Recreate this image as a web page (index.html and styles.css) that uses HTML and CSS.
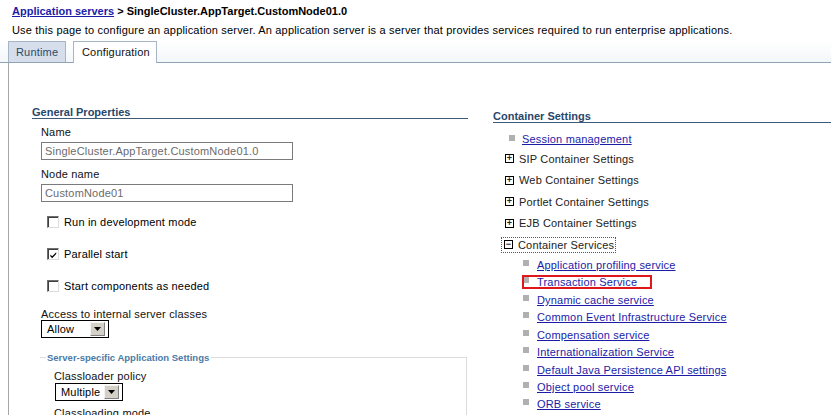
FILE: index.html
```html
<!DOCTYPE html>
<html>
<head>
<meta charset="utf-8">
<link rel="stylesheet" href="styles.css">
</head>
<body>
<div class="crumb"><a href="#">Application servers</a> &gt; SingleCluster.AppTarget.CustomNode01.0</div>
<div class="desc">Use this page to configure an application server. An application server is a server that provides services required to run enterprise applications.</div>
<div class="tabbar">
  <div class="tab tab-off">Runtime</div>
  <div class="tab tab-on">Configuration</div>
</div>
<div class="panel">
  <div class="col-left">
    <div class="heading">General Properties</div>
    <div class="field">
      <div class="label">Name</div>
      <div class="input">SingleCluster.AppTarget.CustomNode01.0</div>
    </div>
    <div class="field">
      <div class="label">Node name</div>
      <div class="input">CustomNode01</div>
    </div>
    <div class="check"><span class="cb"></span>Run in development mode</div>
    <div class="check"><span class="cb"><svg width="10" height="10" viewBox="0 0 10 10"><path d="M1.5 4.5 L3.5 6.5 L8 2 L8 4 L3.5 8.5 L1.5 6.5 Z" fill="#000"/></svg></span>Parallel start</div>
    <div class="check"><span class="cb"></span>Start components as needed</div>
    <div class="field sel-field">
      <div class="label">Access to internal server classes</div>
      <div class="select sel-allow"><span class="sel-text">Allow</span><span class="sel-btn"><svg width="7" height="4" viewBox="0 0 7 4"><path d="M0 0 H7 L3.5 4 Z" fill="#000"/></svg></span></div>
    </div>
    <div class="fieldset">
      <div class="legend">Server-specific Application Settings</div>
      <div class="label">Classloader policy</div>
      <div class="select sel-mult"><span class="sel-text">Multiple</span><span class="sel-btn"><svg width="7" height="4" viewBox="0 0 7 4"><path d="M0 0 H7 L3.5 4 Z" fill="#000"/></svg></span></div>
      <div class="label label-next">Classloading mode</div>
    </div>
  </div>
  <div class="col-right">
    <div class="heading">Container Settings</div>
    <div class="item top-link"><span class="bullet"></span><a href="#">Session management</a></div>
    <div class="item exp"><span class="pm">+</span>SIP Container Settings</div>
    <div class="item exp"><span class="pm">+</span>Web Container Settings</div>
    <div class="item exp"><span class="pm">+</span>Portlet Container Settings</div>
    <div class="item exp"><span class="pm">+</span>EJB Container Settings</div>
    <div class="item exp"><span class="focus"><span class="pm">&minus;</span>Container Services</span></div>
    <ul class="sub">
      <li><span class="bullet"></span><a href="#">Application profiling service</a></li>
      <li class="hl"><span class="bullet"></span><a href="#">Transaction Service</a></li>
      <li><span class="bullet"></span><a href="#">Dynamic cache service</a></li>
      <li><span class="bullet"></span><a href="#">Common Event Infrastructure Service</a></li>
      <li><span class="bullet"></span><a href="#">Compensation service</a></li>
      <li><span class="bullet"></span><a href="#">Internationalization Service</a></li>
      <li><span class="bullet"></span><a href="#">Default Java Persistence API settings</a></li>
      <li><span class="bullet"></span><a href="#">Object pool service</a></li>
      <li><span class="bullet"></span><a href="#">ORB service</a></li>
    </ul>
  </div>
</div>
</body>
</html>
```
FILE: styles.css
```css
html, body {
  margin: 0;
  padding: 0;
  background: #fff;
  overflow: hidden;
}
body {
  font-family: "Liberation Sans", Arial, sans-serif;
  font-size: 11px;
  letter-spacing: 0.18px;
  color: #000;
  width: 831px;
  height: 416px;
}
a {
  color: #1c1ca8;
  text-decoration: underline;
}
.crumb {
  padding: 4px 0 0 12px;
  height: 14px;
  line-height: 14px;
  font-weight: bold;
  letter-spacing: 0;
}
.desc {
  padding: 5px 0 0 12px;
  height: 14px;
  line-height: 14px;
}
.tabbar {
  margin-top: 4px;
  height: 21px;
  padding-left: 8px;
  display: flex;
  align-items: flex-end;
  gap: 7px;
  border-bottom: 1px solid #8fa3b6;
  background: linear-gradient(#ffffff, #f3f7fa);
}
.tab {
  height: 20px;
  line-height: 20px;
  border: 1px solid #a5b5c6;
  border-bottom: none;
}
.tab-off {
  width: 49px;
  padding-left: 7px;
  background: #d5deea;
  color: #2b4a6b;
}
.tab-on {
  width: 74px;
  padding-left: 8px;
  background: #fff;
  height: 21px;
  line-height: 21px;
  margin-bottom: -1px;
  color: #111;
}
.panel {
  margin-left: 8px;
  border-left: 1px solid #a7a7a7;
  height: 352px;
  overflow: hidden;
  display: grid;
  grid-template-columns: 436px 338px;
  column-gap: 25px;
  padding-left: 23px;
}
.heading {
  font-weight: bold;
  color: #27476b;
  height: 11px;
  line-height: 11px;
  border-bottom: 1px solid #3d5a78;
  letter-spacing: 0;
}
.col-left {
  padding-top: 44px;
}
.col-left .heading {
  margin-bottom: 6px;
}
.col-left .field,
.col-left .check {
  margin-left: 9px;
}
.label {
  height: 14px;
  line-height: 14px;
  color: #111;
}
.field .label {
  margin-bottom: 3px;
}
.field + .field {
  margin-top: 7px;
}
.input {
  width: 247px;
  height: 16px;
  line-height: 16px;
  border: 1px solid #7b7b7b;
  padding-left: 3px;
  color: #6b6b6b;
  background: #fff;
}
.check {
  display: flex;
  align-items: center;
  height: 14px;
  margin-top: 18px;
  padding-left: 6px;
}
.field + .check {
  margin-top: 13px;
}
.cb {
  width: 10px;
  height: 10px;
  border: 1px solid;
  border-color: #6e6e6e #dcdcdc #dcdcdc #6e6e6e;
  box-shadow: inset 1px 1px 0 #404040;
  background: #fff;
  margin-right: 5px;
  display: flex;
  align-items: center;
  justify-content: center;
}
.cb svg {
  margin: 1px 0 0 1px;
}
.col-left .sel-field {
  margin-top: 14px;
}
.sel-field .label {
  margin-bottom: 0;
}
.select {
  height: 16px;
  border: 1px solid #000;
  display: flex;
  align-items: center;
  justify-content: space-between;
  background: #fff;
  padding: 0 3px 0 5px;
}
.sel-allow {
  width: 58px;
  margin-top: -1px;
}
.sel-mult {
  width: 58px;
  margin-left: 1px;
}
.sel-text {
  line-height: 16px;
}
.sel-btn {
  width: 13px;
  height: 12px;
  background: #d4d0c8;
  border: 1px solid;
  border-color: #f4f4f4 #808080 #808080 #f4f4f4;
  display: flex;
  align-items: center;
  justify-content: center;
}
.fieldset {
  margin-top: 19px;
  margin-left: 8px;
  border-top: 1px solid #dcdcdc;
  border-right: 1px solid #dcdcdc;
  width: 427px;
  height: 80px;
  position: relative;
  padding: 11px 0 0 14px;
  box-sizing: border-box;
}
.legend {
  position: absolute;
  top: -7px;
  left: 6px;
  background: #fff;
  padding: 0 2px 0 1px;
  font-size: 9.5px;
  font-weight: bold;
  color: #4a7aa8;
  line-height: 13px;
  letter-spacing: 0;
}
.label-next {
  margin-top: 5px;
}
.col-right {
  padding-top: 48px;
}
.item {
  display: flex;
  align-items: center;
  color: #222;
}
.top-link {
  height: 14px;
  margin-top: 9px;
  padding-left: 16px;
}
.top-link .bullet {
  margin-right: 7px;
  margin-top: -3px;
}
.exp {
  height: 21.5px;
  padding-left: 12px;
}
.top-link + .exp {
  margin-top: 2px;
}
.pm {
  width: 7px;
  height: 7px;
  border: 1px solid #000;
  font-size: 9px;
  line-height: 7px;
  text-align: center;
  font-weight: bold;
  margin-right: 5px;
  letter-spacing: 0;
  display: inline-flex;
  align-items: center;
  justify-content: center;
}
.focus {
  display: inline-flex;
  align-items: center;
  outline: 1px dotted #555;
  outline-offset: 0;
  padding: 1px 1px 1px 2px;
  margin-left: -3px;
}
.bullet {
  display: inline-block;
  width: 6px;
  height: 6px;
  background: #b0b0b0;
}
.sub {
  list-style: none;
  margin: 0;
  padding: 1px 0 0 29px;
}
.sub li {
  height: 17.4px;
  display: flex;
  align-items: center;
}
.sub li .bullet {
  margin-right: 8px;
  margin-top: -4px;
  margin-left: 1px;
}
.sub li.hl {
  outline: 2px solid #e0161b;
  outline-offset: -2px;
  width: 130px;
  height: 14px;
  margin: 1px 0 2.4px;
}
```
